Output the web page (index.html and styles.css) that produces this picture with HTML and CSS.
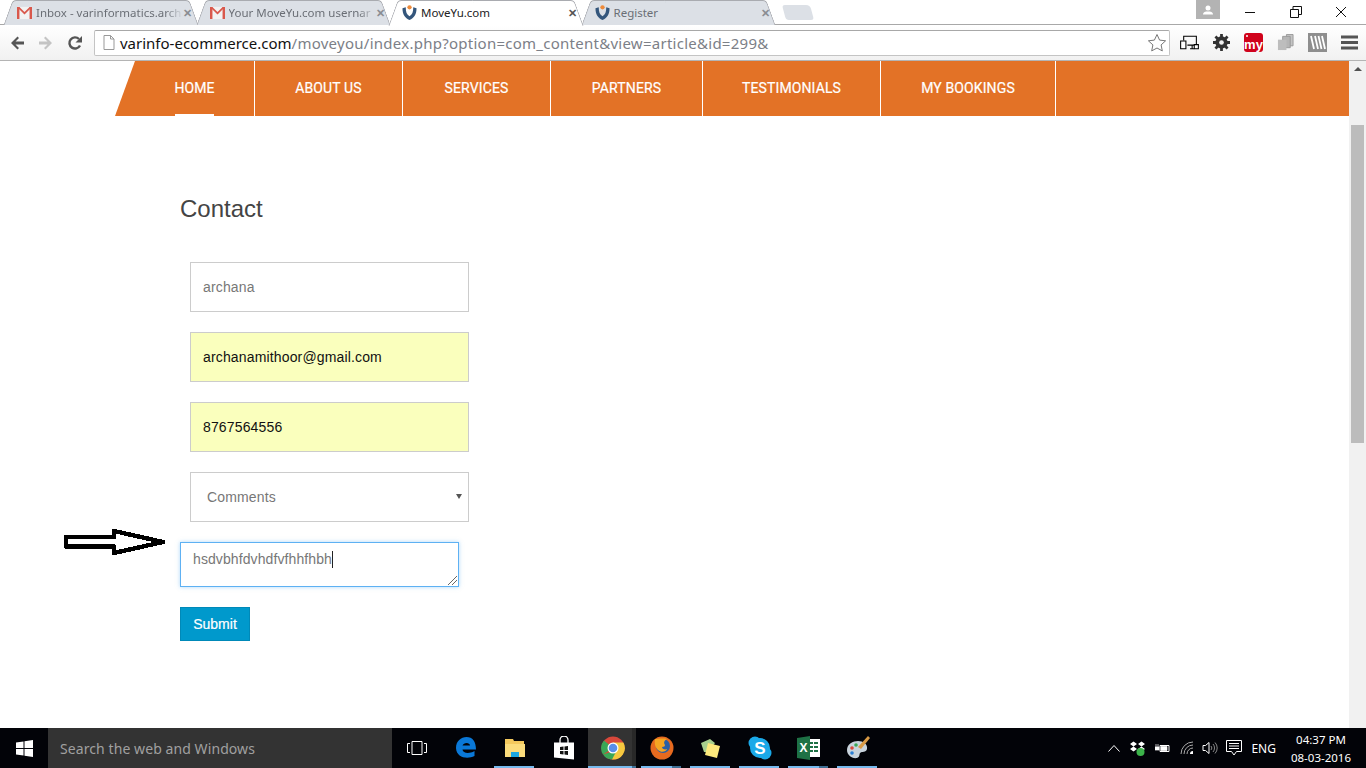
FILE: index.html
```html
<!DOCTYPE html>
<html lang="en">
<head>
    <meta charset="UTF-8">
    <title>MoveYu.com</title>
    <link rel="stylesheet" href="styles.css">
</head>
<body>
    <svg class="defs" width="0" height="0">
        <symbol id="gmail" viewBox="0 0 16 14">
            <path d="M0 1h16v13H0z" fill="#f2f2f2"/>
            <path d="M0 1h2.600v13H0zM13.400 1H16v13h-2.600z" fill="#d9584c"/>
            <path d="M0 1h2.500L8 6.500 13.500 1H16L8 9z" fill="#d9584c"/>
        </symbol>
        <symbol id="moveyu" viewBox="0 0 16 16">
            <path d="M.5 3.500L4 2.500C4 7.500 5 10.500 8 12c3-1.500 4-4.500 4-9.500l3.500 1C15.500 10 12.800 14 8 16 3.200 14 .5 10 .5 3.500z" fill="#34567c"/>
            <circle cx="8" cy="2.500" r="2.300" fill="#ee8a3a"/>
        </symbol>
    </svg>

    <div class="tabstrip">
        <div class="tab">
            <svg class="favicon"><use href="#gmail"/></svg>
            <span class="tab-title tab-cut">Inbox - varinformatics.arch</span>
            <span class="tab-close">✕</span>
        </div>
        <div class="tab">
            <svg class="favicon"><use href="#gmail"/></svg>
            <span class="tab-title tab-cut">Your MoveYu.com usernar</span>
            <span class="tab-close">✕</span>
        </div>
        <div class="tab tab-active">
            <svg class="favicon"><use href="#moveyu"/></svg>
            <span class="tab-title">MoveYu.com</span>
            <span class="tab-close">✕</span>
        </div>
        <div class="tab">
            <svg class="favicon"><use href="#moveyu"/></svg>
            <span class="tab-title">Register</span>
            <span class="tab-close">✕</span>
        </div>
        <div class="tab-new"></div>
        <div class="window-controls">
            <div class="profile">
                <svg width="10" height="10" viewBox="0 0 10 10"><circle cx="5" cy="3" r="2.500" fill="#fff"/><path d="M0 9.500c0-2.500 2.500-3 5-3s5 .5 5 3z" fill="#fff"/></svg>
            </div>
            <div class="win-btn">
                <svg width="12" height="12" viewBox="0 0 12 12"><path d="M1 6.500h10" stroke="#111"/></svg>
            </div>
            <div class="win-btn">
                <svg width="12" height="12" viewBox="0 0 12 12"><path d="M.5 3.500h8v8h-8zM3 3.500V.5h8.500v8H8.500" fill="none" stroke="#111"/></svg>
            </div>
            <div class="win-btn">
                <svg width="12" height="12" viewBox="0 0 12 12"><path d="M1 1l10 10M11 1L1 11" stroke="#111"/></svg>
            </div>
        </div>
    </div>

    <div class="toolbar">
        <svg class="nav-icon" viewBox="0 0 16 16"><path d="M15 6.500H6.500L10 3 8.500 1.500 2 8l6.500 6.500L10 13 6.500 9.500H15z" fill="#555"/></svg>
        <svg class="nav-icon" viewBox="0 0 16 16"><path d="M1 6.500h8.500L6 3l1.500-1.500L14 8l-6.500 6.500L6 13l3.500-3.500H1z" fill="#c4c4c4"/></svg>
        <svg class="nav-icon" viewBox="0 0 16 16"><path d="M13 10.500A5.600 5.600 0 1 1 12 4" fill="none" stroke="#555" stroke-width="2.400"/><path d="M15 1v6.500H8.500z" fill="#555"/></svg>
        <div class="omnibox">
            <svg class="page-icon" viewBox="0 0 12 15"><path d="M1 .5h6.500L11 4v10.500H1z" fill="#fff" stroke="#999"/><path d="M7.500.5V4H11" fill="none" stroke="#999"/></svg>
            <span class="url"><span class="url-host">varinfo-ecommerce.com</span><span class="url-path">/moveyou/index.php?option=com_content&amp;view=article&amp;id=299&amp;</span></span>
            <svg class="star" viewBox="0 0 20 20"><path d="M10 1.500l2.600 5.600 6 .7-4.500 4.100 1.200 6L10 15l-5.300 2.900 1.200-6L1.400 7.800l6-.7z" fill="#fff" stroke="#777"/></svg>
        </div>
        <div class="extensions">
            <svg class="ext" viewBox="0 0 18 14"><path d="M3.500 5V1h12v8.500H7M9.500 13h4M11.500 9.500V13" fill="none" stroke="#000"/><path d="M.6 5.500h5v7.500h-5zM13.500 9h3.900v4h-3.900z" fill="#fff" stroke="#000"/></svg>
            <svg class="ext" viewBox="0 0 16 16"><circle cx="8" cy="8" r="4.300" fill="none" stroke="#333" stroke-width="3"/><path d="M8 0v16M0 8h16M2.300 2.300l11.400 11.400M13.700 2.300L2.300 13.700" stroke="#333" stroke-width="2.600"/><circle cx="8" cy="8" r="2.200" fill="#f3f3f3"/></svg>
            <div class="ext-my">my</div>
            <svg class="ext" viewBox="0 0 18 18"><path d="M10 .5h7v12h-7z" fill="#c4c4c4" stroke="#999"/><path d="M6 2.500h8v12H6z" fill="#b5b5b5" stroke="#999"/><path d="M1 6h9v11H1z" fill="#bdbdbd"/></svg>
            <div class="ext-lines">
                <svg width="19" height="19" viewBox="0 0 19 19"><path d="M3 3l3 13M7 3l3 13M10.500 3l3 13M14 3l3 13" stroke="#fff" stroke-width="1.800"/></svg>
            </div>
            <svg class="ext" viewBox="0 0 14 14"><path d="M0 2.500h14M0 7h14M0 11.500h14" stroke="#555" stroke-width="2.400"/></svg>
        </div>
    </div>

    <div class="viewport">
        <main class="page">
            <nav class="mainnav">
                <a class="nav-link nav-current" href="#"><span>HOME</span></a>
                <a class="nav-link" href="#"><span>ABOUT US</span></a>
                <a class="nav-link" href="#"><span>SERVICES</span></a>
                <a class="nav-link" href="#"><span>PARTNERS</span></a>
                <a class="nav-link" href="#"><span>TESTIMONIALS</span></a>
                <a class="nav-link" href="#"><span>MY BOOKINGS</span></a>
            </nav>
            <section class="content">
                <h2>Contact</h2>
                <form class="contact-form">
                    <input class="field" type="text" value="archana">
                    <input class="field field-filled" type="text" value="archanamithoor@gmail.com">
                    <input class="field field-filled" type="text" value="8767564556">
                    <div class="field field-select">Comments<span class="caret"></span></div>
                    <div class="comment-box">
                        <span>hsdvbhfdvhdfvfhhfhbh</span><span class="text-cursor"></span>
                        <svg class="grip" width="10" height="10" viewBox="0 0 10 10"><path d="M1 10l9-9M5 10l5-5" stroke="#666"/></svg>
                    </div>
                    <button class="submit" type="button">Submit</button>
                </form>
            </section>
            <svg class="arrow" width="104" height="28" viewBox="0 0 104 28"><path d="M3 9h48V3l49 11-49 11v-6.500H3z" fill="#fff" stroke="#000" stroke-width="4.400" stroke-linejoin="round"/></svg>
        </main>
        <div class="scrollbar">
            <div class="scroll-up"></div>
            <div class="scroll-thumb"></div>
        </div>
    </div>

    <footer class="taskbar">
        <div class="start">
            <svg width="17" height="17" viewBox="0 0 17 17"><path d="M0 2.500L7.500 1.400V8H0zM8.500 1.300L17 0v8H8.500zM0 9h7.500v6.600L0 14.500zM8.500 9H17v8l-8.500-1.300z" fill="#fff"/></svg>
        </div>
        <div class="search">Search the web and Windows</div>
        <div class="task-item">
            <svg width="20" height="14" viewBox="0 0 20 14"><path d="M5 .5h10v13H5zM3 2.500H.5v9H3M17 2.500h2.500v9H17" fill="none" stroke="#fff"/></svg>
        </div>
        <div class="task-item">
            <svg width="22" height="22" viewBox="0 0 22 22"><path d="M1 11C1 4 6 0 11.500 0 17.500 0 21 4.500 21 12.500H7.500c.3 3.500 6 5 12 1.500v5c-7 3.500-18 2-18.500-8zM7.500 8.500h7.500C15 5 8.500 5 7.500 8.500z" fill="#0a78d7"/></svg>
        </div>
        <div class="task-item task-open">
            <svg width="22" height="20" viewBox="0 0 22 20"><path d="M1 1h8l1 2h10v15H1z" fill="#f4c95d"/><path d="M1 6h20v13H1z" fill="#fbdc7c"/><path d="M7 19v-5h8v5z" fill="#1ca7e0"/></svg>
        </div>
        <div class="task-item">
            <svg width="22" height="24" viewBox="0 0 22 24"><path d="M7 7V4a4 4 0 0 1 8 0v3" fill="none" stroke="#fff" stroke-width="1.300"/><path d="M1 6.500h20v17L1 21.500z" fill="#fff"/><path d="M7 11l3.500-.5V14H7zM11.500 10.500L15 10v4h-3.500zM7 15h3.500v3.500L7 18zM11.500 15H15v4l-3.500-.5z" fill="#111"/></svg>
        </div>
        <div class="task-item task-open task-group task-current">
            <svg width="24" height="24" viewBox="0 0 24 24"><circle cx="12" cy="12" r="11.500" fill="#d9483b"/><path d="M12 12L2 18.500A11.500 11.500 0 0 1 3 4.500z" fill="#3aa757"/><path d="M12 6.500h10.400A11.500 11.500 0 0 1 11 23.500z" fill="#f6c83f"/><path d="M2 18.500A11.500 11.500 0 0 0 11 23.500L16 14z" fill="#3aa757"/><circle cx="12" cy="12" r="5.500" fill="#fff"/><circle cx="12" cy="12" r="4.300" fill="#5a8ee8"/></svg>
        </div>
        <div class="task-item task-open task-group">
            <svg width="24" height="24" viewBox="0 0 24 24"><circle cx="12" cy="12" r="11.500" fill="#e66a1f"/><circle cx="13" cy="10" r="7" fill="#2a5fa5"/><path d="M5 3c-1 6 1 9 3 11 3 3 8 2 9-1-2 1-5 0-5-2 2 0 3-1 3-2-2-3 0-5 2-6-4-1-9 0-12 0z" fill="#f5a623"/></svg>
        </div>
        <div class="task-item task-open">
            <svg width="24" height="22" viewBox="0 0 24 22"><path d="M2 6l9-4 5 4-7 9H5z" fill="#a8d08d"/><path d="M9 6l12 3-3 12-12-3z" fill="#fde97c"/></svg>
        </div>
        <div class="task-item task-open">
            <svg width="24" height="24" viewBox="0 0 24 24"><circle cx="7" cy="7" r="6.500" fill="#1aa9e8"/><circle cx="17" cy="17" r="6.500" fill="#1aa9e8"/><circle cx="12" cy="12" r="10" fill="#1aa9e8"/><text x="12" y="18" text-anchor="middle" class="skype-s">S</text></svg>
        </div>
        <div class="task-item task-open task-group">
            <svg width="24" height="24" viewBox="0 0 24 24"><path d="M11 3h12v18H11z" fill="#fff"/><path d="M13 6h3v2h-3zM17 6h4v2h-4zM13 10h3v2h-3zM17 10h4v2h-4zM13 14h3v2h-3zM17 14h4v2h-4z" fill="#1e7145"/><path d="M0 2l13-2v24L0 22z" fill="#1e7145"/><text x="6.500" y="16" text-anchor="middle" class="excel-x">X</text></svg>
        </div>
        <div class="task-item task-open">
            <svg width="24" height="24" viewBox="0 0 24 24"><path d="M1 14C1 8 7 5 12 5s10 3 9 8c-1 4-5 2-7 4-1 2 0 4-3 5-5 1-10-3-10-8z" fill="#c8d3dc"/><circle cx="6" cy="12" r="1.800" fill="#d9483b"/><circle cx="10" cy="9" r="1.800" fill="#3aa757"/><circle cx="6" cy="17" r="1.800" fill="#2a7fd5"/><path d="M22 0l2 2-9 11-3-2z" fill="#d99a45"/></svg>
        </div>
        <div class="tray">
            <svg width="12" height="8" viewBox="0 0 12 8"><path d="M.5 7.500L6 1.500l5.500 6" fill="none" stroke="#fff"/></svg>
            <svg width="15" height="15" viewBox="0 0 15 15"><path d="M0 3l3.500-2.500L7 3 3.500 5.500zM8 3l3.500-2.500L15 3l-3.500 2.500zM0 8l3.500-2.500L7 8l-3.500 2.500zM8 8l3.500-2.500L15 8l-3.500 2.500z" fill="#fff"/><circle cx="10.500" cy="11" r="4" fill="#3cb34a"/></svg>
            <svg width="15" height="11" viewBox="0 0 15 11"><path d="M5 2.500h9v6H5z" fill="none" stroke="#fff"/><path d="M6 3.500h6v4H6zM0 4h4v3H0zM1 1v3M3 1v3" fill="#fff" stroke="#fff" stroke-width=".7"/></svg>
            <svg width="16" height="14" viewBox="0 0 16 14"><path d="M1 13A12 12 0 0 1 13 1M4 13a9 9 0 0 1 9-9M7 13a6 6 0 0 1 6-6" fill="none" stroke="#aaa"/><path d="M10 13a3 3 0 0 1 3-3v3z" fill="#fff"/></svg>
            <svg class="tray-volume" width="16" height="14" viewBox="0 0 16 14"><path d="M1 4.500h2.500L7 1.500v11L3.500 9.500H1z" fill="none" stroke="#fff"/><path d="M9 5a3 3 0 0 1 0 4M11 3a6 6 0 0 1 0 8M13 1.500a8 8 0 0 1 0 11" fill="none" stroke="#888"/></svg>
            <svg class="tray-notes" width="16" height="16" viewBox="0 0 16 16"><path d="M.5.500h15v11h-5L8 15l-2.500-3.500h-5zM3 3.500h10M3 6h10M3 8.500h10" fill="none" stroke="#fff"/></svg>
            <span class="tray-lang">ENG</span>
            <div class="clock"><span>04:37 PM</span><span>08-03-2016</span></div>
        </div>
    </footer>
</body>
</html>
```

FILE: styles.css
```css
* {
    box-sizing: border-box;
}

html, body {
    margin: 0;
    height: 768px;
    overflow: hidden;
}

body {
    display: flex;
    flex-direction: column;
    background-color: #fff;
    font-family: "Liberation Sans", Arial, sans-serif;
}

.defs {
    position: absolute;
}

/* browser tabs */
.tabstrip {
    display: flex;
    height: 25px;
    padding-left: 9px;
    background-color: #fff;
    border-bottom: 1px solid #a8a8a8;
    font-family: "Noto Sans", sans-serif;
    font-size: 11.5px;
}

.tab {
    position: relative;
    z-index: 0;
    display: flex;
    align-items: center;
    flex: none;
    width: 184px;
    height: 25px;
    margin-right: 8.5px;
    padding-left: 8px;
    color: #6a6e75;
}

.tab::before,
.tab::after {
    content: "";
    position: absolute;
    z-index: -1;
    top: 0;
    bottom: 0;
    width: 55%;
    background-color: #dce0e6;
    border-top: 1px solid #a9abb0;
}

.tab::before {
    left: -1px;
    border-left: 1px solid #a9abb0;
    border-radius: 4px 0 0 0;
    transform: skewX(-20deg);
}

.tab::after {
    right: -1px;
    border-right: 1px solid #a9abb0;
    border-radius: 0 4px 0 0;
    transform: skewX(20deg);
}

.tab-active {
    z-index: 1;
    height: 26px;
    padding-bottom: 1px;
    color: #222;
}

.tab-active::before,
.tab-active::after {
    background-color: #fff;
}

.favicon {
    flex: none;
    width: 15px;
    height: 15px;
    margin-right: 4px;
}

.tab-title {
    flex: 1;
    overflow: hidden;
    white-space: nowrap;
}

.tab-cut {
    -webkit-mask-image: linear-gradient(to right, #000 88%, transparent);
    mask-image: linear-gradient(to right, #000 88%, transparent);
}

.tab-close {
    flex: none;
    width: 12px;
    margin-right: -2px;
    font-size: 11px;
    font-weight: bold;
    color: #8a8d92;
}

.tab-active .tab-close {
    color: #555;
}

.tab-new {
    flex: none;
    width: 28px;
    height: 15px;
    margin: 5px 0 0 5px;
    background-color: #dce0e6;
    border-radius: 3px 4px 3px 3px;
    transform: skewX(15deg);
}

.window-controls {
    display: flex;
    margin-left: auto;
    padding-right: 2px;
}

.profile {
    display: flex;
    align-items: center;
    justify-content: center;
    width: 24px;
    height: 19px;
    margin-right: 8px;
    background-color: #b3b3b3;
}

.win-btn {
    display: flex;
    align-items: flex-start;
    justify-content: center;
    width: 45.5px;
    padding-top: 6px;
}

/* address bar row */
.toolbar {
    display: flex;
    align-items: center;
    height: 36px;
    padding-left: 9px;
    background: linear-gradient(#fff, #f1f1f1);
    border-bottom: 1px solid #b4b4b4;
}

.nav-icon {
    flex: none;
    width: 16px;
    height: 16px;
    margin-right: 13px;
}

.omnibox {
    display: flex;
    align-items: center;
    flex: none;
    width: 1076px;
    height: 26px;
    margin-left: -2px;
    padding-left: 8px;
    background-color: #fff;
    border: 1px solid #c4c4c4;
    border-top-color: #a8a8a8;
    border-radius: 2px;
    font-family: "Noto Sans", sans-serif;
    font-size: 15px;
    color: #7c8087;
}

.page-icon {
    flex: none;
    width: 12px;
    height: 15px;
    margin-right: 5px;
}

.url {
    flex: 1;
    white-space: nowrap;
}

.url-host {
    color: #111;
}

.url-path {
    letter-spacing: 0.26px;
}

.star {
    flex: none;
    width: 20px;
    height: 20px;
    margin-right: 2px;
}

.extensions {
    display: flex;
    align-items: center;
    gap: 13px;
    margin-left: 10px;
}

.ext {
    flex: none;
    width: 19px;
    height: 17px;
}

.ext-my {
    position: relative;
    width: 19px;
    height: 19px;
    padding-top: 6px;
    background-color: #d0021b;
    border-radius: 3px;
    color: #fff;
    font-size: 13px;
    font-weight: bold;
    line-height: 12px;
    text-align: center;
}

.ext-my::before {
    content: "";
    position: absolute;
    top: 2px;
    left: 2px;
    width: 2px;
    height: 2px;
    background-color: #fff;
    border-radius: 50%;
}

.ext-lines {
    width: 19px;
    height: 19px;
    background-color: #8e8e8e;
}

.ext-lines svg {
    display: block;
}

/* web page */
.viewport {
    display: flex;
    flex: none;
    height: 667px;
}

.page {
    position: relative;
    flex: none;
    width: 1349px;
}

.mainnav {
    display: flex;
    height: 55px;
    margin-left: 115px;
    padding-left: 20px;
    background-color: #e37226;
    clip-path: polygon(20px 0, 100% 0, 100% 100%, 0 100%);
}

.nav-link {
    display: block;
    flex: none;
    width: 148px;
    border-right: 1px solid #fff;
    color: #fff;
    font-family: Roboto, sans-serif;
    font-size: 14px;
    letter-spacing: 0.12px;
    line-height: 54px;
    text-align: center;
    text-decoration: none;
    -webkit-text-stroke: 0.2px #fff;
}

.nav-link:nth-child(1) { width: 120px; letter-spacing: 0; }
.nav-link:nth-child(4) { width: 152px; }
.nav-link:nth-child(5) { width: 178px; }
.nav-link:nth-child(6) { width: 175px; }

.nav-link span {
    display: inline-block;
    height: 55px;
}

.nav-current span {
    border-bottom: 2px solid #fff;
}

.content {
    padding: 79px 0 0 180px;
}

.content h2 {
    margin: 0 0 39px;
    color: #444;
    font-size: 24px;
    font-weight: normal;
    line-height: 28px;
}

.contact-form {
    display: flex;
    flex-direction: column;
    align-items: flex-start;
}

.field {
    display: block;
    width: 279px;
    height: 50px;
    margin: 0 0 20px 10px;
    padding: 0 12px;
    background-color: #fff;
    border: 1px solid #ccc;
    border-radius: 0;
    color: #777;
    font-family: "Liberation Sans", Arial, sans-serif;
    font-size: 14px;
    letter-spacing: 0.15px;
    outline: none;
}

.field-filled {
    background-color: #faffbd;
    color: #111;
}

.field-select {
    position: relative;
    padding-left: 16px;
    line-height: 48px;
}

.caret {
    position: absolute;
    top: 21px;
    right: 6px;
    border-top: 5px solid #555;
    border-left: 3px solid transparent;
    border-right: 3px solid transparent;
}

.comment-box {
    position: relative;
    display: flex;
    align-items: flex-start;
    width: 279px;
    height: 45px;
    padding: 8px 12px;
    background-color: #fff;
    border: 1px solid #5eb1f3;
    box-shadow: 0 0 4px rgba(94, 177, 243, 0.5);
    color: #777;
    font-size: 14px;
    letter-spacing: 0.1px;
    line-height: 16px;
}

.text-cursor {
    width: 1px;
    height: 17px;
    background-color: #222;
}

.grip {
    position: absolute;
    right: 1px;
    bottom: 1px;
}

.submit {
    width: 70px;
    height: 34px;
    margin-top: 20px;
    padding: 0;
    background-color: #0099cc;
    border: 1px solid #0089b8;
    color: #fff;
    font-family: "Liberation Sans", Arial, sans-serif;
    font-size: 14px;
    font-weight: normal;
    -webkit-text-stroke: 0.2px #fff;
}

.arrow {
    position: absolute;
    top: 467px;
    left: 63px;
    shape-rendering: crispEdges;
}

.scrollbar {
    flex: none;
    width: 17px;
    padding: 0 2px;
    background-color: #f1f1f1;
}

.scroll-up {
    width: 0;
    height: 0;
    margin: 6px auto 0;
    border-bottom: 4px solid #505050;
    border-left: 4px solid transparent;
    border-right: 4px solid transparent;
}

.scroll-thumb {
    height: 318px;
    margin-top: 54px;
    background-color: #bcbcbc;
}

/* windows taskbar */
.taskbar {
    display: flex;
    align-items: center;
    flex: none;
    height: 40px;
    background-color: #020308;
    color: #fff;
}

.start {
    display: flex;
    align-items: center;
    justify-content: center;
    width: 48px;
    height: 40px;
}

.search {
    width: 344px;
    height: 40px;
    padding-left: 12px;
    background-color: #333;
    color: #a0a0a0;
    font-family: "Noto Sans", sans-serif;
    font-size: 14px;
    letter-spacing: 0.08px;
    line-height: 42px;
}

.task-item {
    position: relative;
    display: flex;
    align-items: center;
    justify-content: center;
    width: 49px;
    height: 40px;
}

.task-open::after {
    content: "";
    position: absolute;
    left: 4px;
    right: 5px;
    bottom: 0;
    height: 2px;
    background-color: #76b9ed;
}

.task-group::after {
    background: linear-gradient(to right, #76b9ed 78%, #3f6f94 78%);
}

.task-current {
    background: linear-gradient(to right, #333 44px, #282828 44px, #282828 48px, transparent 48px);
}

.task-current::after {
    left: 0;
    right: 1px;
    background: linear-gradient(to right, #76b9ed 44px, #3f6f94 44px);
}

.skype-s {
    fill: #fff;
    font-family: "Liberation Sans", sans-serif;
    font-size: 17px;
    font-weight: bold;
}

.excel-x {
    fill: #fff;
    font-family: "Liberation Sans", sans-serif;
    font-size: 12px;
    font-weight: bold;
}

.tray {
    display: flex;
    align-items: center;
    gap: 10px;
    margin-left: auto;
    padding-right: 15px;
}

.tray-volume {
    margin-left: -4px;
    margin-right: -2px;
}

.tray-notes {
    margin-right: -1px;
}

.tray-lang {
    font-family: "Noto Sans", sans-serif;
    font-size: 12px;
}

.clock {
    display: flex;
    flex-direction: column;
    align-items: center;
    margin-left: 5px;
    padding-top: 2px;
    font-family: "Noto Sans", sans-serif;
    font-size: 11.5px;
    line-height: 18px;
}
```
